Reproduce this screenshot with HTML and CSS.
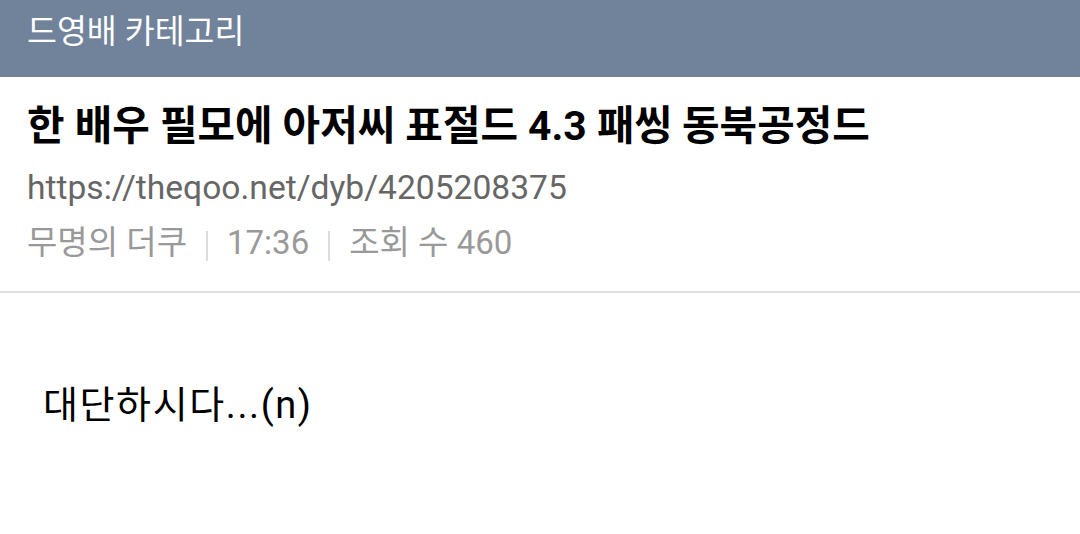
FILE: index.html
```html
<!DOCTYPE html>
<html lang="ko">
<head>
<meta charset="utf-8">
<link rel="stylesheet" href="styles.css">
</head>
<body>
<header class="bar">드영배 카테고리</header>
<section class="post-head">
  <h1 class="title">한 배우 필모에 아저씨 표절드 4.3 패씽 동북공정드</h1>
  <div class="url">https://theqoo.net/dyb/4205208375</div>
  <div class="meta"><span>무명의 더쿠</span><span class="sep"></span><span>17:36</span><span class="sep"></span><span>조회 수 460</span></div>
</section>
<main class="content">대단하시다...(n)</main>
</body>
</html>
```
FILE: styles.css
```css
html, body { margin: 0; padding: 0; background: #fff; }
body { font-family: Roboto, "Noto Sans CJK KR", sans-serif; width: 1080px; height: 534px; overflow: hidden; }
.bar {
  height: 77px;
  background: #71829b;
  color: #fff;
  font-size: 32.5px;
  line-height: 64px;
  padding-left: 27px;
  box-sizing: border-box;
}
.post-head {
  padding: 24px 27px 0;
  height: 216px;
  box-sizing: border-box;
  border-bottom: 2px solid #dedede;
}
.title {
  margin: 0;
  font-size: 40.8px;
  font-weight: 700;
  line-height: 50px;
  color: #000;
}
.url {
  margin-top: 12px;
  font-size: 33.6px;
  line-height: 50px;
  color: #666;
}
.meta {
  margin-top: 5px;
  font-size: 33px;
  line-height: 50px;
  color: #999;
  display: flex;
  align-items: center;
}
.sep {
  width: 2px;
  height: 30px;
  background: #dcdcdc;
  margin: 6px 19px 0;
}
.content {
  padding: 87px 0 0 43px;
  font-size: 38px;
  line-height: 50px;
  letter-spacing: 1.6px;
  color: #000;
}
```
